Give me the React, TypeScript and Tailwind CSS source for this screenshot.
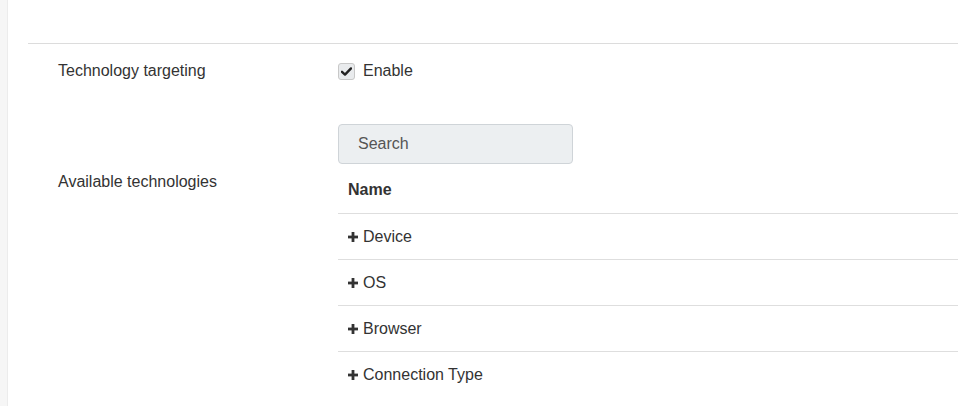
import React from "react";

function Plus() {
  return (
    <svg width="10" height="10" viewBox="0 0 10 10" className="mr-[5px] shrink-0">
      <rect x="0" y="3.6" width="10" height="2.8" fill="#333" />
      <rect x="3.6" y="0" width="2.8" height="10" fill="#333" />
    </svg>
  );
}

const rows = ["Device", "OS", "Browser", "Connection Type"];

export default function App() {
  return (
    <div
      className="flex w-[958px] h-[406px] overflow-hidden bg-white text-[#333] text-[16px]"
      style={{ fontFamily: '"Liberation Sans", Arial, sans-serif' }}
    >
      <div className="w-[8px] shrink-0 bg-[#f6f6f6] border-r border-[#ececec]" />
      <div className="flex-1 pl-[20px]">
        <div className="h-[44px] border-b border-[#dcdcdc]" />
        <div className="flex pt-[16px]">
          <div className="w-[310px] pl-[30px] leading-[22px] shrink-0">Technology targeting</div>
          <label className="flex items-center h-[22px]">
            <span className="w-[17px] h-[17px] rounded-[3px] border border-[#c8c8c8] bg-[#e9ebed] flex items-center justify-center">
              <svg width="11" height="9" viewBox="0 0 11 9">
                <path d="M1 4.8 L4 7.6 L10 1.4" stroke="#222" strokeWidth="2.4" fill="none" strokeLinecap="round" strokeLinejoin="round" />
              </svg>
            </span>
            <span className="ml-[8px]">Enable</span>
          </label>
        </div>
        <div className="flex pt-[42px]">
          <div className="w-[310px] pl-[30px] pt-[47px] leading-[22px] shrink-0">Available technologies</div>
          <div className="flex-1">
            <div className="w-[235px] h-[40px] rounded-[4px] border border-[#cfd4d8] bg-[#eceff1] flex items-center pl-[19px] text-[#555]">
              Search
            </div>
            <div className="h-[50px] border-b border-[#dedede] flex items-center pl-[10px] pt-[3px] font-bold">
              Name
            </div>
            {rows.map((r, i) => (
              <div
                key={r}
                className={
                  i < rows.length - 1
                    ? "h-[46px] border-b border-[#dedede] flex items-center pl-[10px]"
                    : "h-[46px] flex items-center pl-[10px]"
                }
              >
                <Plus />
                <span>{r}</span>
              </div>
            ))}
          </div>
        </div>
      </div>
    </div>
  );
}
